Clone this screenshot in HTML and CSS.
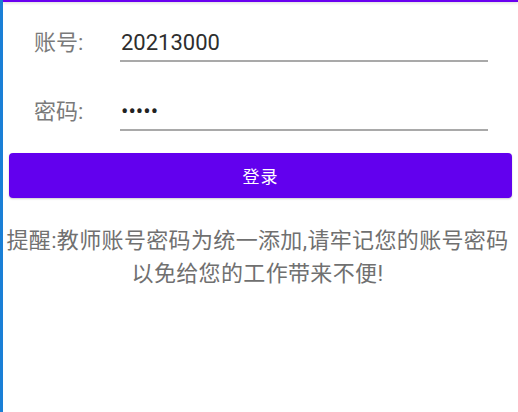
FILE: index.html
```html
<!DOCTYPE html>
<html lang="zh-CN">
<head>
  <meta charset="UTF-8" />
  <meta name="viewport" content="width=device-width, initial-scale=1.0" />
  <title>登录</title>
  <link rel="stylesheet" href="styles.css">
</head>
<body>
  <div class="screen">
    <div class="topbar"></div>
    <div class="login-form">
      <div class="row">
        <span class="label">账号:</span>
        <div class="field">20213000</div>
      </div>
      <div class="row">
        <span class="label">密码:</span>
        <div class="field dots">•••••</div>
      </div>
      <button class="login-btn">登录</button>
      <p class="tip">提醒:教师账号密码为统一添加,请牢记您的账号密码<br>以免给您的工作带来不便!</p>
    </div>
  </div>
</body>
</html>
```

FILE: styles.css
```css
body {
  margin: 0;
  padding: 0;
  background-color: #fff;
  font-family: Roboto, "Noto Sans CJK SC", sans-serif;
}
.screen {
  min-height: 412px;
  border-left: 3px solid #1a7fd6;
  box-sizing: border-box;
}
.topbar {
  height: 2px;
  background-color: #6a00f0;
  box-shadow: 0 1px 3px rgba(0, 0, 0, 0.18);
}
.login-form {
  padding: 28px 6px 0 6px;
}
.row {
  display: flex;
  align-items: flex-start;
  margin-bottom: 37px;
  padding-left: 25px;
  padding-right: 24px;
}
.row:last-of-type {
  margin-bottom: 22px;
}
.label {
  width: 86px;
  font-size: 22px;
  line-height: 26px;
  color: #7a7a7a;
}
.field {
  flex: 1;
  font-size: 22px;
  line-height: 26px;
  color: #2e2e2e;
  padding: 0 0 4px 1px;
  border-bottom: 2px solid #a9a9a9;
}
.dots {
  color: #222;
}
.login-btn {
  display: block;
  width: 100%;
  height: 45px;
  border: none;
  border-radius: 4px;
  background-color: #6200ee;
  color: #fff;
  font-family: Roboto, "Noto Sans CJK SC", sans-serif;
  font-size: 17px;
  letter-spacing: 1px;
  box-shadow: 0 1px 2px rgba(0, 0, 0, 0.2);
}
.tip {
  margin: 26px 0 0 -6px;
  font-size: 22px;
  line-height: 33px;
  letter-spacing: 0.35px;
  text-align: center;
  color: #707070;
}
```
